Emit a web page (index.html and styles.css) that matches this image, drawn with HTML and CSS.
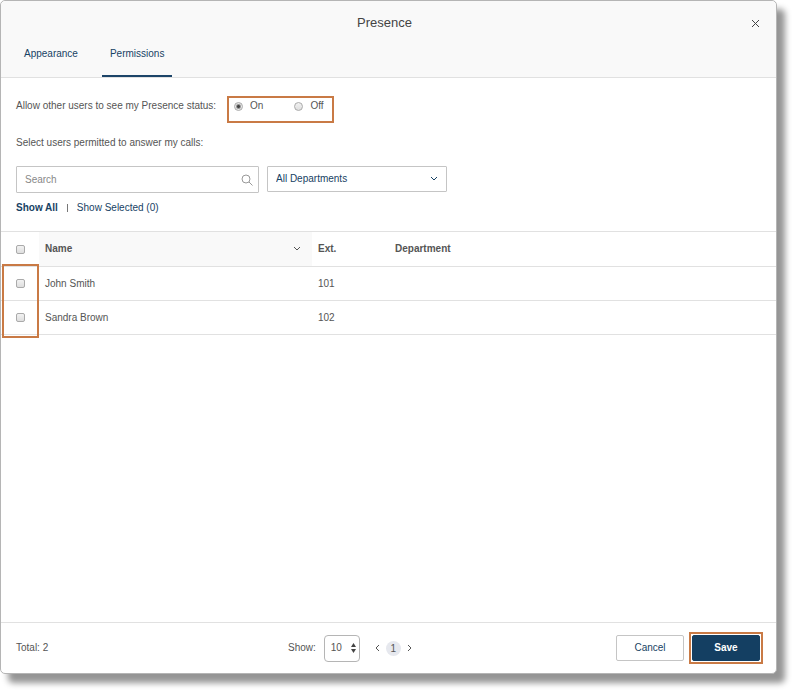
FILE: index.html
```html
<!DOCTYPE html>
<html lang="en">
<head>
    <meta charset="UTF-8">
    <meta name="viewport" content="width=device-width, initial-scale=1.0">
    <title>Presence</title>
    <link rel="stylesheet" href="styles.css">
</head>
<body>
    <main class="dialog">
        <header class="dialog-header">
            <div class="title-bar">
                <h1>Presence</h1>
                <button type="button" class="close" aria-label="Close">
                    <svg width="9" height="9" viewBox="0 0 9 9"><path d="M1 1l7 7M8 1l-7 7"/></svg>
                </button>
            </div>
            <nav class="tabs">
                <a href="#appearance" class="tab">Appearance</a>
                <a href="#permissions" class="tab active" aria-current="page">Permissions</a>
            </nav>
        </header>

        <section class="settings">
            <div class="status" role="radiogroup" aria-labelledby="statusLabel">
                <span id="statusLabel" class="status-label">Allow other users to see my Presence status:</span>
                <div class="options highlight">
                    <label class="option"><input type="radio" name="status" value="on" checked>On</label>
                    <label class="option"><input type="radio" name="status" value="off">Off</label>
                </div>
            </div>
            <p class="hint">Select users permitted to answer my calls:</p>
            <div class="filters">
                <div class="search">
                    <input type="text" id="search" placeholder="Search" aria-label="Search">
                    <svg width="12" height="12" viewBox="0 0 12 12"><circle cx="5" cy="5" r="4"/><path d="M8 8l3.5 3.5"/></svg>
                </div>
                <div class="department">
                    <select id="department" aria-label="Department">
                        <option>All Departments</option>
                    </select>
                    <svg width="8" height="6" viewBox="0 0 8 6"><path d="M1 1l3 3 3-3"/></svg>
                </div>
            </div>
            <div class="show-links">
                <a href="#all" class="current">Show All</a>
                <span class="divider"></span>
                <a href="#selected">Show Selected (0)</a>
            </div>
        </section>

        <div class="users">
            <table>
                <colgroup>
                    <col class="col-check">
                    <col class="col-name">
                    <col class="col-ext">
                    <col>
                </colgroup>
                <thead>
                    <tr>
                        <th><input type="checkbox" aria-label="Select all users"></th>
                        <th class="sorted">
                            <div class="sort">Name <svg width="8" height="6" viewBox="0 0 8 6"><path d="M1 1l3 3 3-3"/></svg></div>
                        </th>
                        <th>Ext.</th>
                        <th>Department</th>
                    </tr>
                </thead>
                <tbody>
                    <tr>
                        <td><input type="checkbox" id="user101"></td>
                        <td><label for="user101">John Smith</label></td>
                        <td>101</td>
                        <td></td>
                    </tr>
                    <tr>
                        <td><input type="checkbox" id="user102"></td>
                        <td><label for="user102">Sandra Brown</label></td>
                        <td>102</td>
                        <td></td>
                    </tr>
                </tbody>
            </table>
            <div class="highlight check-highlight"></div>
        </div>

        <footer class="dialog-footer">
            <span>Total: 2</span>
            <div class="paging">
                <label for="pageSize">Show:</label>
                <div class="page-size">
                    <select id="pageSize">
                        <option>10</option>
                    </select>
                    <svg width="5" height="10" viewBox="0 0 5 10"><path d="M0 4l2.5-4L5 4zM0 6l2.5 4L5 6z"/></svg>
                </div>
                <div class="pages">
                    <button type="button" aria-label="Previous page">
                        <svg width="5" height="8" viewBox="0 0 5 8"><path d="M4 1L1 4l3 3"/></svg>
                    </button>
                    <span class="page">1</span>
                    <button type="button" aria-label="Next page">
                        <svg width="5" height="8" viewBox="0 0 5 8"><path d="M1 1l3 3-3 3"/></svg>
                    </button>
                </div>
            </div>
            <div class="actions">
                <button type="button" class="button">Cancel</button>
                <div class="highlight save-highlight">
                    <button type="submit" class="button primary">Save</button>
                </div>
            </div>
        </footer>
    </main>
</body>
</html>
```
FILE: styles.css
```css
* {
    box-sizing: border-box;
}

body {
    margin: 0;
    padding: 0 18px 18px 0;
    min-height: 100vh;
    display: flex;
    background: #fff;
    color: #555;
    font-family: 'Liberation Sans', Arial, sans-serif;
    font-size: 10px;
    line-height: 14px;
}

a {
    color: #174264;
    text-decoration: none;
}

button, input, select {
    font: inherit;
    color: inherit;
    margin: 0;
}

button {
    border: none;
    background: none;
    padding: 0;
    cursor: pointer;
}

svg {
    display: block;
    fill: none;
    stroke: #555;
    pointer-events: none;
}

.dialog {
    flex: 1;
    display: flex;
    flex-direction: column;
    background: #fff;
    border: 1px solid #b5b5b5;
    border-radius: 5px;
    box-shadow: 8px 9px 6px rgba(0, 0, 0, 0.42);
}

.highlight {
    border: 2px solid #c97a45;
}

/* header */
.dialog-header {
    background: #f9f9f9;
    border-bottom: 1px solid #e1e1e1;
    border-radius: 5px 5px 0 0;
}

.title-bar {
    display: grid;
    grid-template-columns: 1fr auto 1fr;
    align-items: center;
    padding: 14px 16px 0 8px;
}

h1 {
    grid-column: 2;
    margin: 0;
    color: #444;
    font-size: 13px;
    font-weight: normal;
    line-height: 16px;
}

.close {
    justify-self: end;
}

.close svg {
    stroke: #444;
}

.tabs {
    display: flex;
    gap: 16px;
    padding: 0 15px;
}

.tab {
    padding: 15px 8px 14px;
    border-bottom: 2px solid transparent;
    line-height: 15px;
}

.tab.active {
    border-bottom-color: #1c4468;
}

/* settings */
.settings {
    padding: 18px 15px 16px;
}

.status {
    display: flex;
    align-items: flex-start;
    gap: 11px;
}

.status-label {
    padding-top: 3px;
}

.options {
    display: flex;
    gap: 31px;
    padding: 1px 8px 8px 5px;
}

.option {
    display: flex;
    align-items: center;
    gap: 7px;
}

input[type="radio"], input[type="checkbox"] {
    appearance: none;
    display: block;
    width: 9px;
    height: 9px;
    border: 1px solid #aaa;
    background: linear-gradient(#f2f2f2, #dedede);
}

input[type="radio"] {
    border-radius: 50%;
}

input[type="radio"]:checked {
    background: radial-gradient(circle, #444 1px, #e8e8e8 3px);
}

input[type="checkbox"] {
    border-radius: 2px;
}

.hint {
    margin: 13px 0 16px;
}

.filters {
    display: flex;
    align-items: flex-start;
    gap: 8px;
}

.search, .department, .page-size {
    display: grid;
    align-items: center;
}

/* the icon shares one grid cell with its field */
.search > *, .department > *, .page-size > * {
    grid-area: 1 / 1;
}

.search svg, .department svg, .page-size svg {
    justify-self: end;
}

.search {
    flex: 0 1 243px;
}

.search svg {
    stroke: #999;
    margin-right: 6px;
}

.department {
    flex: 0 1 180px;
}

.department svg {
    stroke: #174264;
    margin-right: 9px;
}

.search input, .department select {
    width: 100%;
    height: 27px;
    padding: 0 8px;
    border: 1px solid #c5c5c5;
    border-radius: 1px;
    background: #fff;
}

.search input::placeholder {
    color: #888;
}

.department select {
    appearance: none;
    height: 26px;
    color: #174264;
}

.show-links {
    display: flex;
    align-items: center;
    gap: 9px;
    margin-top: 8px;
}

.show-links .current {
    font-weight: bold;
}

.divider {
    width: 1px;
    height: 8px;
    background: #777;
}

/* users */
.users {
    position: relative;
    flex: 1;
}

table {
    width: 100%;
    table-layout: fixed;
    border-collapse: collapse;
    border-top: 1px solid #e1e1e1;
}

.col-check {
    width: 38px;
}

.col-name {
    width: 273px;
}

.col-ext {
    width: 77px;
}

th, td {
    height: 34px;
    padding: 0 6px;
    border-bottom: 1px solid #e1e1e1;
    text-align: left;
}

th {
    height: 35px;
}

th:first-child, td:first-child {
    padding-left: 15px;
}

.sorted {
    background: #f9f9f9;
}

.sort {
    display: flex;
    align-items: center;
    justify-content: space-between;
    padding-right: 5px;
}

.check-highlight {
    position: absolute;
    top: 33px;
    left: 1px;
    width: 37px;
    height: 74px;
}

/* footer */
.dialog-footer {
    display: grid;
    grid-template-columns: 264px auto 1fr;
    align-items: center;
    gap: 8px;
    padding: 9px 13px 9px 15px;
    border-top: 1px solid #e1e1e1;
}

.paging, .pages, .actions {
    display: flex;
    align-items: center;
}

.paging {
    gap: 8px;
}

.page-size select {
    appearance: none;
    width: 36px;
    height: 27px;
    padding: 0 6px;
    border: 1px solid #b5b5b5;
    border-radius: 4px;
    background: #fff;
}

.page-size svg {
    fill: #444;
    stroke: none;
    margin-right: 4px;
}

.pages {
    gap: 6px;
    padding-left: 7px;
}

.page {
    width: 15px;
    border-radius: 8px;
    background: #e6e8ee;
    line-height: 15px;
    text-align: center;
}

.actions {
    justify-content: flex-end;
    gap: 5px;
}

.button {
    width: 68px;
    height: 26px;
    border: 1px solid #c5c5c5;
    border-radius: 2px;
    color: #174264;
}

.button.primary {
    border-color: #143f62;
    background: #143f62;
    color: #fff;
    font-weight: bold;
}

.save-highlight {
    padding: 1px;
}
```
